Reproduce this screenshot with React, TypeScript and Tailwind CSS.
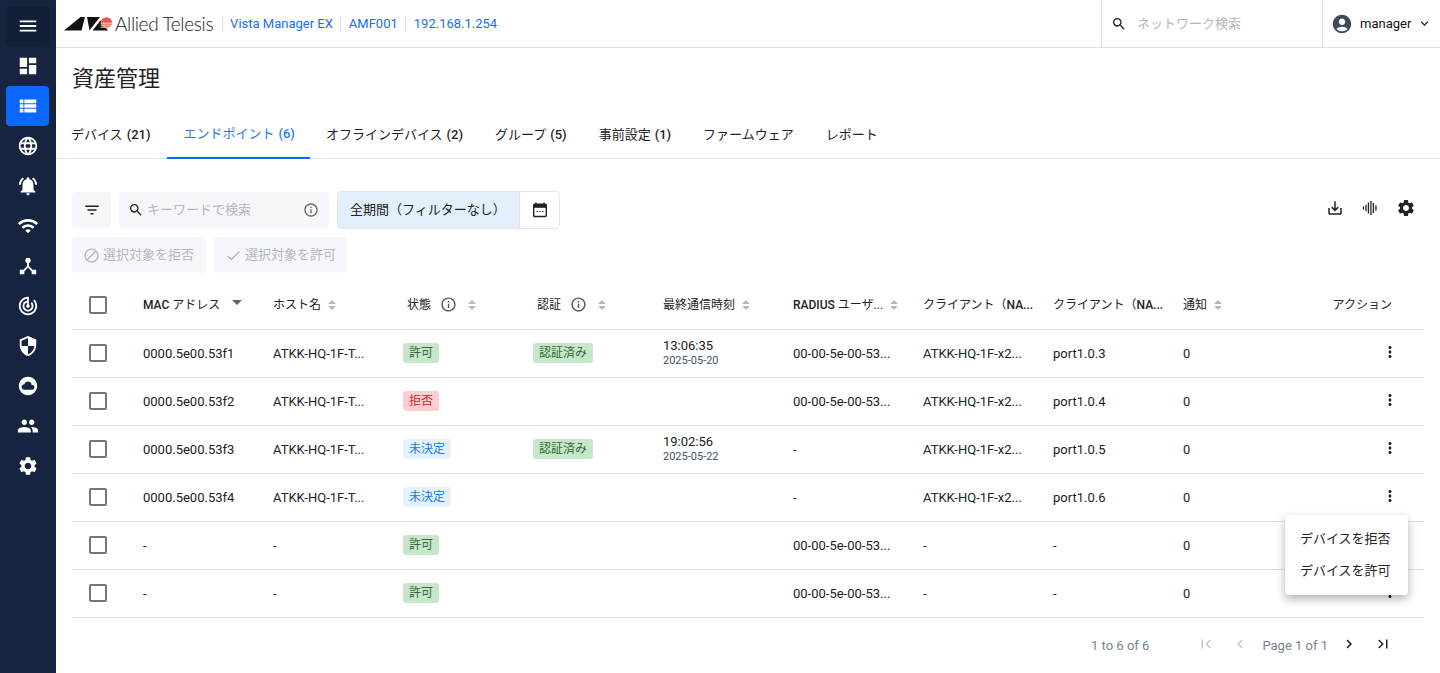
import React from "react";
import {
  MdMenu, MdDashboard, MdViewList, MdLanguage, MdNotificationsActive, MdWifi, MdDeviceHub, MdTrackChanges,
  MdSecurity, MdCloudCircle, MdPeople, MdSettings, MdSearch, MdAccountCircle, MdKeyboardArrowDown, MdFilterList,
  MdInfoOutline, MdBlock, MdCheck, MdMoreVert, MdFirstPage, MdChevronLeft, MdChevronRight, MdLastPage, MdSaveAlt,
} from "react-icons/md";

function Sort() {
  return (
    <svg width="10" height="12" viewBox="0 0 10 12" className="text-[#b4bac4] shrink-0">
      <path d="M5 1l4 4H1z M5 11L1 7h8z" fill="currentColor" />
    </svg>
  );
}

function Logo() {
  return (
    <div className="flex items-center">
      <svg width="49" height="16" viewBox="0 0 49 16" className="shrink-0">
        <g transform="translate(0 1)">
          <polygon points="0,13.5 16.5,0 21,0 17.5,13.5" fill="#111" />
          <polygon points="23,0 36,0 25.5,13.5" fill="#111" />
          <polygon points="28.5,13.5 36.5,3.5 44,13.5" fill="#111" />
          <circle cx="42.5" cy="5.8" r="5.6" fill="#e8584f" />
          <path d="M36.5 6.2h12M36.5 8.2h12M36.5 10.2h12" stroke="#fff" strokeWidth="0.8" />
        </g>
      </svg>
      <span className="[font-family:Lato,sans-serif] font-light text-[19px] leading-none text-[#222] ml-[2px] tracking-[-0.35px]">Allied Telesis</span>
    </div>
  );
}

const side = [MdDashboard, MdViewList, MdLanguage, MdNotificationsActive, MdWifi, MdDeviceHub, MdTrackChanges, MdSecurity, MdCloudCircle, MdPeople, MdSettings];

function Sidebar() {
  return (
    <aside className="w-14 shrink-0 bg-[#16243f] flex flex-col items-start pl-[6px] pt-[6px] relative z-10">
      <div className="w-[43px] h-[40px] rounded bg-[#121f38] flex items-center justify-center">
        <MdMenu className="text-white text-[22px]" />
      </div>
      {side.map((I, i) => (
        <div key={i} className={`w-[43px] h-[40px] rounded flex items-center justify-center ${i === 1 ? "bg-[#0b68ff]" : ""}`}>
          <I className="text-white text-[22px]" />
        </div>
      ))}
    </aside>
  );
}

function Header() {
  return (
    <header className="h-12 shrink-0 border-b border-[#e0e0e0] flex items-stretch">
      <div className="flex items-center pl-2 flex-1">
        <Logo />
        <div className="flex items-center text-[13px] text-[#1a6cf0] ml-[9px]">
          <span className="border-l border-[#dcdfe6] pl-[7px] pr-[7px] leading-[16px]">Vista Manager EX</span>
          <span className="border-l border-[#dcdfe6] pl-[8px] pr-[7px] leading-[16px]">AMF001</span>
          <span className="border-l border-[#dcdfe6] pl-[8px] leading-[16px]">192.168.1.254</span>
        </div>
      </div>
      <div className="w-[221px] border-l border-[#e0e0e0] flex items-center pl-[9px]">
        <MdSearch className="text-[16px] text-[#222]" />
        <span className="ml-[10px] text-[13px] text-[#b3b7bf]">ネットワーク検索</span>
      </div>
      <div className="w-[118px] border-l border-[#e0e0e0] flex items-center pl-[8px]">
        <MdAccountCircle className="text-[22px] text-[#3f4a5c]" />
        <span className="ml-[7px] text-[13px] text-[#111]">manager</span>
        <MdKeyboardArrowDown className="ml-[6px] text-[15px] text-[#222]" />
      </div>
    </header>
  );
}

const tabs: [string, string | null, number][] = [
  ["デバイス", "(21)", 0],
  ["エンドポイント", "(6)", 1],
  ["オフラインデバイス", "(2)", 0],
  ["グループ", "(5)", 0],
  ["事前設定", "(1)", 0],
  ["ファームウェア", null, 0],
  ["レポート", null, 0],
];

function Tabs() {
  return (
    <div className="h-[48px] border-b border-[#dfe1e5] flex text-[13px] shrink-0 ml-[-1px]">
      {tabs.map(([t, c, a], i) => (
        <div key={i} className={`px-4 flex items-center h-[48px] ${i === 0 ? "pr-[17px]" : ""} ${i === 1 ? "pr-[15px]" : ""} ${a ? "border-b-2 border-[#0b68ff] text-[#2a78f0]" : "text-[#222]"}`}>
          <span>{t}</span>
          {c && <span className="ml-1 text-[13px] font-medium">{c}</span>}
        </div>
      ))}
    </div>
  );
}

function Waves() {
  return (
    <svg width="16" height="16" viewBox="0 0 16 16" stroke="#222" strokeWidth="1.3">
      <path d="M1.4 6.5v3M3.9 5v6M6.4 2.5v11M8.9 1v14M11.4 3v10M13.9 5.5v5" />
    </svg>
  );
}

function Calendar() {
  return (
    <svg width="16" height="16" viewBox="0 0 16 16" fill="none">
      <path d="M4 .5v3M12 .5v3" stroke="#222" strokeWidth="1.4" />
      <rect x="1.7" y="2.2" width="12.6" height="12.3" rx="1" stroke="#222" strokeWidth="1.4" />
      <rect x="1.7" y="2.2" width="12.6" height="3.6" fill="#222" />
      <path d="M4.5 9.5h1.5M7.3 9.5h1.5M10 9.5h1.5" stroke="#222" strokeWidth="1.2" />
    </svg>
  );
}

function Toolbar() {
  return (
    <div className="flex items-start justify-between pl-[16px] pr-[24px] mt-[32px] shrink-0 h-[38px]">
      <div className="flex items-center h-[38px]">
        <div className="w-[39px] h-[36px] rounded bg-[#f5f7fb] flex items-center justify-center">
          <MdFilterList className="text-[18px] text-[#222]" />
        </div>
        <div className="w-[210px] h-[36px] rounded bg-[#f5f7fb] ml-2 flex items-center pl-[9px] pr-[10px] text-[13px]">
          <MdSearch className="text-[16px] text-[#222]" />
          <span className="ml-[3px] text-[#b3b7bf] flex-1">キーワードで検索</span>
          <MdInfoOutline className="text-[16px] text-[#666]" />
        </div>
        <div className="ml-2 w-[223px] h-[38px] rounded border border-[#e2e5ea] flex overflow-hidden">
          <div className="w-[181px] bg-[#e3f0fb] flex items-center pl-3 text-[13px] text-[#222]">全期間（フィルターなし）</div>
          <div className="flex-1 border-l border-[#e2e5ea] flex items-center justify-center">
            <Calendar />
          </div>
        </div>
      </div>
      <div className="flex items-center gap-[18px] text-[#222] h-[34px]">
        <MdSaveAlt className="text-[18px]" />
        <Waves />
        <MdSettings className="text-[20px]" />
      </div>
    </div>
  );
}

function Actions() {
  return (
    <div className="flex pl-[16px] gap-2 mt-[8px] shrink-0 text-[13px] text-[#b3b7bf]">
      <div className="h-[36px] w-[134px] rounded bg-[#f5f7fb] flex items-center pl-[11px]">
        <MdBlock className="text-[17px] text-[#b3b7bf]" />
        <span className="ml-[3px]">選択対象を拒否</span>
      </div>
      <div className="h-[36px] w-[133px] rounded bg-[#f5f7fb] flex items-center pl-[11px]">
        <MdCheck className="text-[17px] text-[#b3b7bf]" />
        <span className="ml-[3px]">選択対象を許可</span>
      </div>
    </div>
  );
}

function Chip({ kind, children }: { kind: "g" | "r" | "b"; children: React.ReactNode }) {
  const cls = { g: "bg-[#c8e6c9] text-[#2e6b34]", r: "bg-[#ffcdd2] text-[#c62828]", b: "bg-[#e3f2fd] text-[#1a7ae0]" }[kind];
  return <span className={`inline-flex items-center h-[20px] px-[6px] rounded-[3px] text-[12px] ${cls}`}>{children}</span>;
}

function Box({ c }: { c?: string }) {
  return <div className={`w-[18px] h-[18px] rounded-[2px] border-2 border-[#757575] ml-[17px] ${c ?? ""}`} />;
}

const grid = "grid grid-cols-[71px_130px_130px_130px_130px_130px_130px_130px_130px_1fr_60px] items-center";

function HeadRow() {
  const H = ({ c, children }: { c?: string; children: React.ReactNode }) => (
    <div className={`flex items-center gap-[6px] whitespace-nowrap ${c ?? ""}`}>{children}</div>
  );
  return (
    <div className={`${grid} h-[50px] border-b border-[#e0e0e0] text-[12px] text-[#222] mt-[7px]`}>
      <Box />
      <H><span className="font-medium">MAC</span><span className="ml-[-3px]">アドレス</span>
        <svg width="10" height="6" viewBox="0 0 10 6" className="ml-[6px] mb-1"><path d="M0 0h10L5 5z" fill="#5b6472" /></svg>
      </H>
      <H><span>ホスト名</span><Sort /></H>
      <H c="pl-[4px]"><span>状態</span><MdInfoOutline className="text-[17px] text-[#555] ml-[3px]" /><span className="ml-[4px]"><Sort /></span></H>
      <H c="pl-[4px]"><span>認証</span><MdInfoOutline className="text-[17px] text-[#555] ml-[3px]" /><span className="ml-[4px]"><Sort /></span></H>
      <H><span>最終通信時刻</span><Sort /></H>
      <H><span className="font-medium">RADIUS</span><span className="ml-[-3px]">ユーザ...</span><Sort /></H>
      <H><span>クライアント（<span className="font-medium">NA...</span></span></H>
      <H><span>クライアント（<span className="font-medium">NA...</span></span></H>
      <H><span>通知</span><Sort /></H>
      <div className="justify-self-end mr-[32px] whitespace-nowrap">アクション</div>
    </div>
  );
}

type R = [string, string, "g" | "r" | "b", string, boolean, [string, string] | null, string, string, string];
const rows: R[] = [
  ["0000.5e00.53f1", "ATKK-HQ-1F-T...", "g", "許可", true, ["13:06:35", "2025-05-20"], "00-00-5e-00-53...", "ATKK-HQ-1F-x2...", "port1.0.3"],
  ["0000.5e00.53f2", "ATKK-HQ-1F-T...", "r", "拒否", false, null, "00-00-5e-00-53...", "ATKK-HQ-1F-x2...", "port1.0.4"],
  ["0000.5e00.53f3", "ATKK-HQ-1F-T...", "b", "未決定", true, ["19:02:56", "2025-05-22"], "-", "ATKK-HQ-1F-x2...", "port1.0.5"],
  ["0000.5e00.53f4", "ATKK-HQ-1F-T...", "b", "未決定", false, null, "-", "ATKK-HQ-1F-x2...", "port1.0.6"],
  ["-", "-", "g", "許可", false, null, "00-00-5e-00-53...", "-", "-"],
  ["-", "-", "g", "許可", false, null, "00-00-5e-00-53...", "-", "-"],
];

function Row({ r }: { r: R }) {
  return (
    <div className={`${grid} h-[48px] border-b border-[#e0e0e0] text-[13px] text-[#222]`}>
      <Box c="mb-[2px]" />
      <div>{r[0]}</div>
      <div>{r[1]}</div>
      <div className="flex mb-[2px]"><Chip kind={r[2]}>{r[3]}</Chip></div>
      <div className="flex mb-[2px]">{r[4] && <Chip kind="g">認証済み</Chip>}</div>
      <div className="leading-[15px] pb-[2px]">
        {r[5] && (<><div>{r[5][0]}</div><div className="text-[11px] text-[#44546a]">{r[5][1]}</div></>)}
      </div>
      <div>{r[6]}</div>
      <div>{r[7]}</div>
      <div>{r[8]}</div>
      <div>0</div>
      <div className="justify-self-end mr-[25px] mb-[3px]"><MdMoreVert className="text-[18px] text-[#222]" /></div>
    </div>
  );
}

function Pager() {
  return (
    <div className="flex items-center h-[55px] pr-[48px] justify-end text-[13px] text-[#78828f]">
      <span className="mr-[48px]">1 to 6 of 6</span>
      <MdFirstPage className="text-[18px] text-[#c4c7cc] mb-1" />
      <MdChevronLeft className="text-[18px] text-[#c4c7cc] ml-[16px] mb-1" />
      <span className="ml-[13px]">Page 1 of 1</span>
      <MdChevronRight className="text-[18px] text-[#222] ml-[12px] mb-1" />
      <MdLastPage className="text-[18px] text-[#222] ml-[16px] mb-1" />
    </div>
  );
}

export default function App() {
  return (
    <div className="h-screen w-full flex overflow-hidden bg-white [font-family:Roboto,'Noto_Sans_CJK_JP',sans-serif]">
      <Sidebar />
      <main className="flex-1 min-w-0 flex flex-col relative">
        <Header />
        <h1 className="text-[22px] leading-[28px] text-[#222] pl-[16px] mt-[17px] mb-[18px] shrink-0">資産管理</h1>
        <Tabs />
        <Toolbar />
        <Actions />
        <div className="px-[16px]">
          <HeadRow />
          {rows.map((r, i) => <Row key={i} r={r} />)}
        </div>
        <Pager />
        <div className="absolute left-[1229px] top-[515px] w-[123px] h-[80px] bg-white rounded-[4px] shadow-[0_4px_10px_rgba(0,0,0,0.3)] flex flex-col justify-center pl-[15px] text-[13px] leading-[20px] text-[#222] gap-[12px]">
          <div>デバイスを拒否</div>
          <div>デバイスを許可</div>
        </div>
      </main>
    </div>
  );
}
